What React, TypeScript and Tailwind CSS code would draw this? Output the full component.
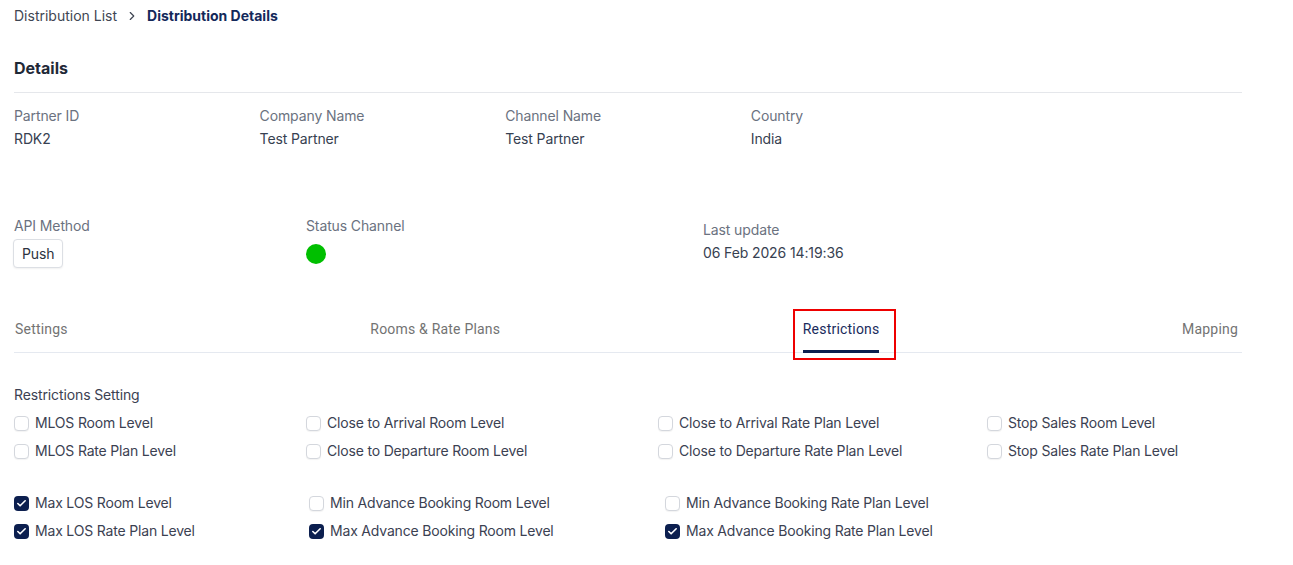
import { ChevronRight, Check } from 'lucide-react';

interface InfoItem {
  label: string;
  value: string;
}

interface RestrictionOption {
  label: string;
  checked: boolean;
}

const partnerInfo: InfoItem[] = [
  { label: 'Partner ID', value: 'RDK2' },
  { label: 'Company Name', value: 'Test Partner' },
  { label: 'Channel Name', value: 'Test Partner' },
  { label: 'Country', value: 'India' },
];

const tabs = ['Settings', 'Rooms & Rate Plans', 'Restrictions', 'Mapping'];

// Columnas de restricciones: cada grupo con su propio ancho de columna
const closeGroup: { width: string; items: RestrictionOption[] }[] = [
  {
    width: 'w-[292px]',
    items: [
      { label: 'MLOS Room Level', checked: false },
      { label: 'MLOS Rate Plan Level', checked: false },
    ],
  },
  {
    width: 'w-[352px]',
    items: [
      { label: 'Close to Arrival Room Level', checked: false },
      { label: 'Close to Departure Room Level', checked: false },
    ],
  },
  {
    width: 'w-[329px]',
    items: [
      { label: 'Close to Arrival Rate Plan Level', checked: false },
      { label: 'Close to Departure Rate Plan Level', checked: false },
    ],
  },
  {
    width: 'w-[240px]',
    items: [
      { label: 'Stop Sales Room Level', checked: false },
      { label: 'Stop Sales Rate Plan Level', checked: false },
    ],
  },
];

const advanceGroup: { width: string; items: RestrictionOption[] }[] = [
  {
    width: 'w-[295px]',
    items: [
      { label: 'Max LOS Room Level', checked: true },
      { label: 'Max LOS Rate Plan Level', checked: true },
    ],
  },
  {
    width: 'w-[356px]',
    items: [
      { label: 'Min Advance Booking Room Level', checked: false },
      { label: 'Max Advance Booking Room Level', checked: true },
    ],
  },
  {
    width: 'w-[300px]',
    items: [
      { label: 'Min Advance Booking Rate Plan Level', checked: false },
      { label: 'Max Advance Booking Rate Plan Level', checked: true },
    ],
  },
];

function Checkbox({ label, checked }: RestrictionOption) {
  return (
    <label className="flex items-center gap-[6px] h-[28px] text-sm tracking-[-0.18px] text-[#3b4152]">
      {checked ? (
        <span className="w-[15px] h-[15px] rounded-[4px] bg-[#0c1f4f] flex items-center justify-center">
          <Check className="w-[11px] h-[11px] text-white" strokeWidth={3.5} />
        </span>
      ) : (
        <span className="w-[15px] h-[15px] rounded-[4px] border border-[#d4d7dd] bg-white shadow-[0_1px_1px_rgba(0,0,0,0.05)]" />
      )}
      <span>{label}</span>
    </label>
  );
}

function CheckboxGroup({ columns }: { columns: { width: string; items: RestrictionOption[] }[] }) {
  return (
    <div className="flex">
      {columns.map((col, i) => (
        <div key={i} className={`${col.width} shrink-0 flex flex-col`}>
          {col.items.map((item) => (
            <Checkbox key={item.label} label={item.label} checked={item.checked} />
          ))}
        </div>
      ))}
    </div>
  );
}

export default function App() {
  return (
    <div className="min-h-screen bg-white px-[14px] font-['Inter',sans-serif]">
      <div className="w-[1228px]">
        {/* Breadcrumb */}
        <nav className="flex items-center gap-[8px] pt-[6px] text-sm leading-5">
          <span className="text-[#3f4653]">Distribution List</span>
          <ChevronRight className="w-[14px] h-[14px] text-[#3f4653]" strokeWidth={2} />
          <span className="font-bold text-[#13285a]">Distribution Details</span>
        </nav>

        <h2 className="mt-[30px] pb-[12px] text-base leading-6 font-bold text-[#1f2937] border-b border-[#e5e7eb]">
          Details
        </h2>

        {/* Datos del partner */}
        <div className="grid grid-cols-5 mt-[13px] text-sm leading-5 tracking-[-0.12px]">
          {partnerInfo.map((info) => (
            <div key={info.label} className="flex flex-col gap-[3px]">
              <span className="text-[#6b7280]">{info.label}</span>
              <span className="text-[#374151]">{info.value}</span>
            </div>
          ))}
        </div>

        <div className="flex items-start mt-[67px] text-sm leading-5 tracking-[-0.12px]">
          <div className="w-[292px] flex flex-col gap-[3px]">
            <span className="text-[#6b7280]">API Method</span>
            <div className="-ml-px">
              <button className="h-[29px] px-[8px] rounded-[4px] border border-[#dcdfe4] bg-white text-[#2d3340] shadow-[0_1px_2px_rgba(0,0,0,0.06)]">
                Push
              </button>
            </div>
          </div>
          <div className="w-[397px] flex flex-col gap-[3px]">
            <span className="text-[#6b7280]">Status Channel</span>
            <div className="h-[29px] flex items-center">
              <span className="w-[20px] h-[20px] rounded-full bg-[#00bf00]" />
            </div>
          </div>
          <div className="pt-[4px] flex flex-col gap-[3px]">
            <span className="text-[#6b7280]">Last update</span>
            <span className="text-[#374151]">06 Feb 2026 14:19:36</span>
          </div>
        </div>

        {/* Tabs */}
        <div className="flex justify-between mt-[51px] border-b border-[#e5e9f0] font-['Roboto',sans-serif] text-sm leading-5 tracking-[0.2px] pl-px pr-[4px]">
          {tabs.map((tab) => {
            const active = tab === 'Restrictions';
            return (
              <div key={tab} className="relative pb-[13px]">
                <span className={active ? 'text-[#1a2b5c]' : 'text-[#737373]'}>{tab}</span>
                {active && (
                  <>
                    <span className="absolute left-0 right-0 bottom-[-1px] h-[3px] bg-[#0c1f4f]" />
                    <span className="absolute left-[-10px] right-[-17px] top-[-10px] bottom-[-8px] border-2 border-[#ee0000]" />
                  </>
                )}
              </div>
            );
          })}
        </div>

        {/* Restricciones */}
        <p className="mt-[32px] text-sm leading-5 tracking-[-0.12px] text-[#3b4152]">Restrictions Setting</p>
        <div className="mt-[4px]">
          <CheckboxGroup columns={closeGroup} />
        </div>
        <div className="mt-[24px]">
          <CheckboxGroup columns={advanceGroup} />
        </div>
      </div>
    </div>
  );
}
